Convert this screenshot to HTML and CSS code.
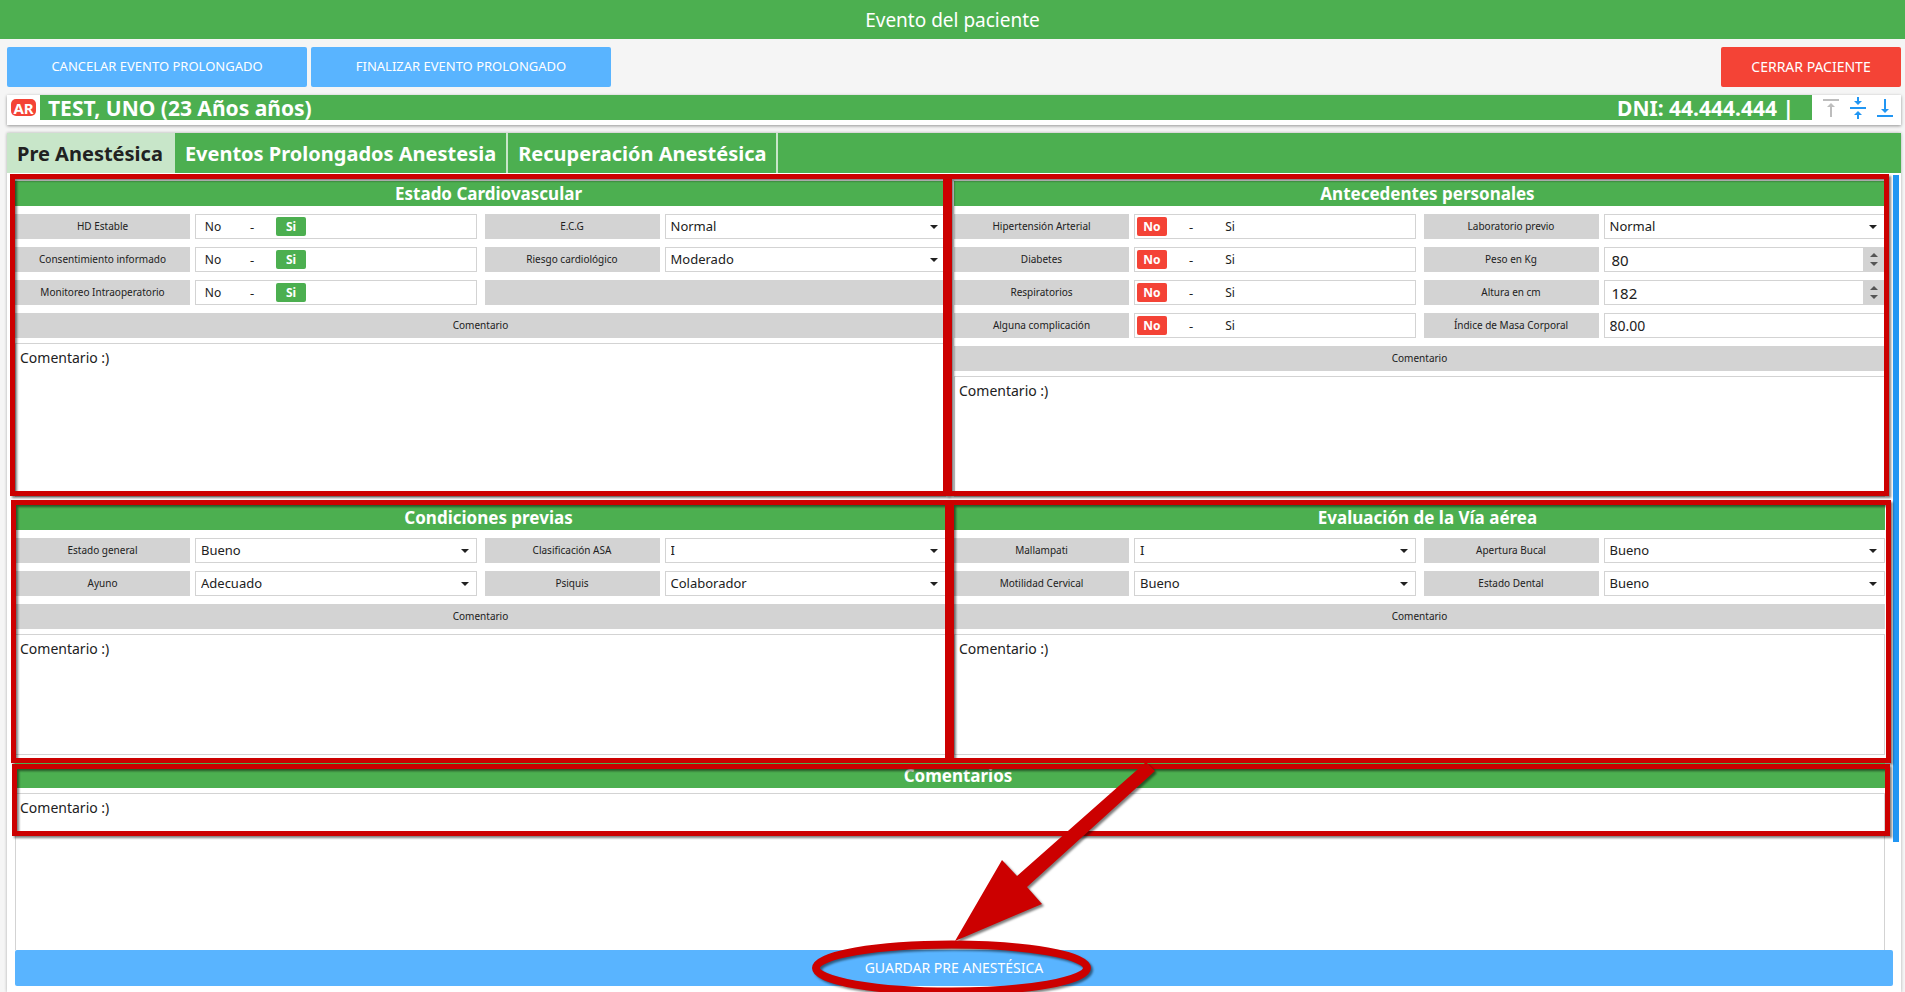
FILE: index.html
```html
<!DOCTYPE html>
<html lang="es">
<head>
<meta charset="utf-8">
<title>Evento del paciente</title>
<link rel="stylesheet" href="styles.css">
</head>
<body>
<header class="topbar"><h1>Evento del paciente</h1></header>
<div class="actions">
  <button class="btn btn-event" type="button">CANCELAR EVENTO PROLONGADO</button>
  <button class="btn btn-event" type="button">FINALIZAR EVENTO PROLONGADO</button>
  <button class="btn btn-close" type="button">CERRAR PACIENTE</button>
</div>
<div class="patient">
  <span class="badge">AR</span>
  <div class="patient-info"><span>TEST, UNO (23 Años años)</span><span>DNI: 44.444.444 |</span></div>
  <div class="aligners">
    <button type="button" aria-label="Alinear arriba" class="muted"><svg width="24" height="24" viewBox="0 0 24 24" fill="currentColor"><path d="M8 11h3v10h2V11h3l-4-4-4 4zM4 3v2h16V3H4z"/></svg></button>
    <button type="button" aria-label="Centrar"><svg width="24" height="24" viewBox="0 0 24 24" fill="currentColor"><path d="M8 19h3v4h2v-4h3l-4-4-4 4zm8-14h-3V1h-2v4H8l4 4 4-4zM4 11v2h16v-2H4z"/></svg></button>
    <button type="button" aria-label="Alinear abajo"><svg width="24" height="24" viewBox="0 0 24 24" fill="currentColor"><path d="M16 13h-3V3h-2v10H8l4 4 4-4zM4 19v2h16v-2H4z"/></svg></button>
  </div>
</div>
<main class="panel">
  <nav class="tabs">
    <a href="#pre" class="tab active">Pre Anestésica</a>
    <a href="#eventos" class="tab">Eventos Prolongados Anestesia</a>
    <a href="#recuperacion" class="tab">Recuperación Anestésica</a>
  </nav>
  <div class="scroll">
    <form class="form" id="pre">
      <section class="card">
        <h2>Estado Cardiovascular</h2>
        <div class="fields">
          <div class="field"><span class="label">HD Estable</span><div class="toggle"><label><input type="radio" name="hd"><span>No</span></label><i>-</i><label class="yes"><input type="radio" name="hd" checked><span>Si</span></label></div></div>
          <div class="field"><label class="label" for="ecg">E.C.G</label><div class="select"><select id="ecg"><option>Normal</option></select></div></div>
          <div class="field"><span class="label">Consentimiento informado</span><div class="toggle"><label><input type="radio" name="ci"><span>No</span></label><i>-</i><label class="yes"><input type="radio" name="ci" checked><span>Si</span></label></div></div>
          <div class="field"><label class="label" for="riesgo">Riesgo cardiológico</label><div class="select"><select id="riesgo"><option>Moderado</option></select></div></div>
          <div class="field"><span class="label">Monitoreo Intraoperatorio</span><div class="toggle"><label><input type="radio" name="mi"><span>No</span></label><i>-</i><label class="yes"><input type="radio" name="mi" checked><span>Si</span></label></div></div>
          <div class="blank"></div>
        </div>
        <label class="label wide" for="c1">Comentario</label>
        <textarea id="c1">Comentario :)</textarea>
        <div class="mark mark-top-left"></div>
      </section>
      <section class="card">
        <h2>Antecedentes personales</h2>
        <div class="fields">
          <div class="field"><span class="label">Hipertensión Arterial</span><div class="toggle"><label><input type="radio" name="ha" checked><span>No</span></label><i>-</i><label class="yes"><input type="radio" name="ha"><span>Si</span></label></div></div>
          <div class="field"><label class="label" for="lab">Laboratorio previo</label><div class="select"><select id="lab"><option>Normal</option></select></div></div>
          <div class="field"><span class="label">Diabetes</span><div class="toggle"><label><input type="radio" name="di" checked><span>No</span></label><i>-</i><label class="yes"><input type="radio" name="di"><span>Si</span></label></div></div>
          <div class="field"><label class="label" for="peso">Peso en Kg</label><div class="number"><input id="peso" type="number" value="80"><span class="spin"></span></div></div>
          <div class="field"><span class="label">Respiratorios</span><div class="toggle"><label><input type="radio" name="re" checked><span>No</span></label><i>-</i><label class="yes"><input type="radio" name="re"><span>Si</span></label></div></div>
          <div class="field"><label class="label" for="altura">Altura en cm</label><div class="number"><input id="altura" type="number" value="182"><span class="spin"></span></div></div>
          <div class="field"><span class="label">Alguna complicación</span><div class="toggle"><label><input type="radio" name="ac" checked><span>No</span></label><i>-</i><label class="yes"><input type="radio" name="ac"><span>Si</span></label></div></div>
          <div class="field"><label class="label" for="imc">Índice de Masa Corporal</label><input class="text" id="imc" type="text" value="80.00"></div>
        </div>
        <label class="label wide" for="c2">Comentario</label>
        <textarea id="c2">Comentario :)</textarea>
        <div class="mark mark-top-right"></div>
      </section>
      <section class="card">
        <h2>Condiciones previas</h2>
        <div class="fields">
          <div class="field"><label class="label" for="eg">Estado general</label><div class="select"><select id="eg"><option>Bueno</option></select></div></div>
          <div class="field"><label class="label" for="asa">Clasificación ASA</label><div class="select"><select id="asa"><option>I</option></select></div></div>
          <div class="field"><label class="label" for="ayuno">Ayuno</label><div class="select"><select id="ayuno"><option>Adecuado</option></select></div></div>
          <div class="field"><label class="label" for="psiquis">Psiquis</label><div class="select"><select id="psiquis"><option>Colaborador</option></select></div></div>
        </div>
        <label class="label wide" for="c3">Comentario</label>
        <textarea id="c3">Comentario :)</textarea>
        <div class="mark mark-mid-left"></div>
      </section>
      <section class="card">
        <h2>Evaluación de la Vía aérea</h2>
        <div class="fields">
          <div class="field"><label class="label" for="mall">Mallampati</label><div class="select"><select id="mall"><option>I</option></select></div></div>
          <div class="field"><label class="label" for="ab">Apertura Bucal</label><div class="select"><select id="ab"><option>Bueno</option></select></div></div>
          <div class="field"><label class="label" for="mc">Motilidad Cervical</label><div class="select"><select id="mc"><option>Bueno</option></select></div></div>
          <div class="field"><label class="label" for="ed">Estado Dental</label><div class="select"><select id="ed"><option>Bueno</option></select></div></div>
        </div>
        <label class="label wide" for="c4">Comentario</label>
        <textarea id="c4">Comentario :)</textarea>
        <div class="mark mark-mid-right"></div>
      </section>
      <section class="card full">
        <h2><label for="c5">Comentarios</label></h2>
        <textarea id="c5">Comentario :)</textarea>
        <div class="mark mark-bottom"></div>
      </section>
    </form>
    <div class="track"><div class="thumb"></div></div>
  </div>
  <div class="save">
    <button class="btn" type="submit" form="pre">GUARDAR PRE ANESTÉSICA</button>
    <svg class="pointer" width="360" height="242" viewBox="804 758 360 242" aria-hidden="true">
      <ellipse cx="951.5" cy="968" rx="135.5" ry="23.5" fill="none" stroke="#c00" stroke-width="8"/>
      <path fill="#c00" d="M1146 762l9 9L1027 887l15 17L955 941l47-81 15 16z"/>
    </svg>
  </div>
</main>
</body>
</html>
```

FILE: styles.css
```css
* { box-sizing: border-box; }
body {
  margin: 0;
  height: 100vh;
  display: flex;
  flex-direction: column;
  overflow: hidden;
  background: #f5f5f5;
  color: #212121;
  font-family: "Noto Sans", sans-serif;
  font-size: 13px;
}
h1, h2 { margin: 0; }
button, input, select, textarea { font: inherit; color: inherit; border-radius: 0; }
.topbar {
  height: 39px;
  display: flex;
  align-items: center;
  justify-content: center;
  background: #4caf50;
  color: #fff;
}
.topbar h1 { font-size: 19px; font-weight: 400; }
.actions { display: flex; gap: 4px; padding: 8px 4px 8px 7px; }
.btn {
  height: 40px;
  padding: 0 0 2px;
  border: 0;
  border-radius: 2px;
  background: #59b4ff;
  color: #fff;
  font-size: 14px;
}
.btn-event { width: 300px; font-size: 13px; }
.btn-close { width: 180px; margin-left: auto; background: #f44336; }
.patient {
  display: flex;
  height: 30px;
  margin: 0 4px 8px 7px;
  background: #fff;
  box-shadow: 0 1px 3px rgba(0, 0, 0, .4);
}
.badge {
  width: 25px;
  height: 17px;
  margin: 4px 4px 0;
  border-radius: 5px;
  background: #f44336;
  color: #fff;
  font-size: 15px;
  line-height: 18px;
  font-weight: 700;
  text-align: center;
}
.patient-info {
  flex: 1;
  display: flex;
  justify-content: space-between;
  height: 25px;
  padding: 0 18px 0 8px;
  background: #4caf50;
  color: #fff;
  font-size: 21px;
  line-height: 26px;
  font-weight: 700;
}
.aligners { display: flex; gap: 3px; padding: 1px 4px 0 7px; }
.aligners button { width: 24px; height: 24px; padding: 0; border: 0; background: none; color: #2196f3; }
.aligners .muted { color: #bdbdbd; }
.aligners svg { display: block; }
.panel {
  flex: 1;
  min-height: 0;
  display: flex;
  flex-direction: column;
  margin: 0 4px 0 7px;
  background: #fff;
  box-shadow: 0 0 3px rgba(0, 0, 0, .3);
}
.tabs { display: flex; height: 40px; flex: none; background: #4caf50; }
.tab {
  padding: 0 10px;
  border-right: 2px solid #c8e6c9;
  color: #fff;
  font-size: 20px;
  line-height: 42px;
  font-weight: 700;
  text-decoration: none;
}
.tab.active { background: #c8e6c9; color: #212121; }
.scroll { flex: 1; min-height: 0; display: flex; gap: 8px; padding: 2px 2px 0 8px; overflow: hidden; }
.form {
  flex: 1;
  display: grid;
  grid-template-columns: 1fr 1fr;
  align-content: start;
  gap: 8px;
  padding-top: 6px;
}
.card { position: relative; display: flex; flex-direction: column; }
.full { grid-column: 1 / -1; }
.card h2 {
  height: 25px;
  padding-left: 16px;
  background: #4caf50;
  color: #fff;
  font-size: 17px;
  line-height: 26px;
  text-align: center;
}
.fields { display: grid; grid-template-columns: 1fr 1fr; gap: 8px; padding: 8px 0; }
.field { display: grid; grid-template-columns: 175px 1fr; gap: 5px; height: 25px; }
.label {
  background: #d3d3d3;
  font-size: 10px;
  line-height: 25px;
  text-align: center;
}
.wide { height: 25px; margin-bottom: 5px; }
.blank { background: #d3d3d3; }
.toggle, .number, .select, .text { border: 1px solid #d3d3d3; background: #fff; }
.toggle { display: flex; align-items: center; padding-left: 2px; }
.toggle i { width: 48px; font-style: normal; text-align: center; }
.toggle label { position: relative; width: 30px; height: 19px; }
.toggle input { position: absolute; opacity: 0; margin: 0; }
.toggle span { display: block; border-radius: 2px; line-height: 19px; text-align: center; font-size: 12px; }
.toggle input:checked + span { background: #f44336; color: #fff; font-weight: 700; }
.toggle .yes input:checked + span { background: #4caf50; }
.select { position: relative; }
.select select {
  display: block;
  width: 100%;
  height: 23px;
  padding: 0 5px 2px;
  border: 0;
  background: none;
  appearance: none;
}
.select::after {
  content: "";
  position: absolute;
  right: 7px;
  top: 10px;
  border: 4px solid transparent;
  border-top-color: #212121;
  border-bottom: 0;
  pointer-events: none;
}
.text { width: 100%; padding: 0 5px; font-size: 14px; }
.number { display: flex; border-right: 0; }
.number input {
  flex: 1;
  min-width: 0;
  padding: 0 7px;
  border: 0;
  background: none;
  font-size: 15px;
  appearance: textfield;
}
.number input::-webkit-inner-spin-button { display: none; }
.spin {
  width: 22px;
  display: flex;
  flex-direction: column;
  align-items: center;
  justify-content: center;
  gap: 5px;
  background: #d3d3d3;
}
.spin::before, .spin::after { content: ""; border: 4px solid transparent; }
.spin::before { border-bottom-color: #555; border-top: 0; }
.spin::after { border-top-color: #555; border-bottom: 0; }
textarea {
  display: block;
  flex: 1;
  width: 100%;
  min-height: 121px;
  padding: 4px;
  border: 1px solid #d3d3d3;
  background: #fff;
  font-size: 14px;
  line-height: 20px;
  resize: none;
}
.full textarea { min-height: 200px; margin-top: 5px; }
.track { width: 6px; }
.thumb { height: 86%; background: #2196f3; }
.save { position: relative; z-index: 2; flex: none; padding: 0 8px 6px; }
.save .btn { display: block; width: 100%; height: 36px; }
/* Instruction marks drawn over the form */
.mark {
  position: absolute;
  border: 5px solid #c00;
  filter: drop-shadow(2px 2px 1px rgba(0, 0, 0, .5));
  pointer-events: none;
}
.mark-top-left { inset: -7px -2px 1px -5px; }
.mark-top-right { inset: -7px -4px 1px -7px; }
.mark-mid-left { inset: -5px -4px -8px -4px; }
.mark-mid-right { inset: -5px -6px -8px -5px; }
.mark-bottom { inset: 1px -5px auto -3px; height: 72px; }
.pointer {
  position: absolute;
  left: 50%;
  bottom: -8px;
  margin-left: -150px;
  filter: drop-shadow(2px 2px 1px rgba(0, 0, 0, .5));
  pointer-events: none;
}
```
